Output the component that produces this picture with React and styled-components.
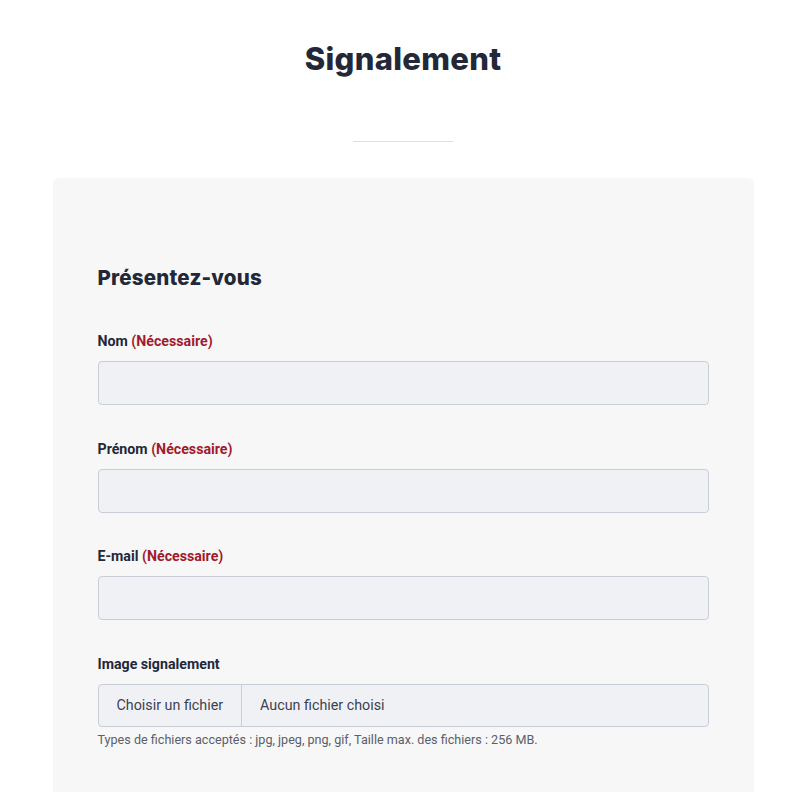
import React from "react";
import styled, { createGlobalStyle } from "styled-components";

const GlobalStyle = createGlobalStyle`
  html, body {
    margin: 0;
    padding: 0;
    background: #fff;
  }
  * {
    box-sizing: border-box;
  }
`;

const Page = styled.div`
  width: 100%;
  padding-top: 40px;
  font-family: "Roboto", "Liberation Sans", sans-serif;
  color: #222838;
`;

const Header = styled.header`
  display: flex;
  flex-direction: column;
  align-items: center;
`;

const Title = styled.h1`
  margin: 0;
  font-family: "Inter", "Liberation Sans", sans-serif;
  font-size: 31px;
  font-weight: 800;
  line-height: 38px;
  letter-spacing: 0.3px;
  color: #222838;
`;

const Rule = styled.hr`
  width: 100px;
  height: 1px;
  margin: 63px 0 0 0;
  border: 0;
  background: #dcdfe6;
`;

const Card = styled.section`
  width: 701px;
  margin: 36px auto 0 auto;
  padding: 85px 45px 60px 45px;
  min-height: 640px;
  background: #f7f7f7;
  border-radius: 6px;
`;

const SectionTitle = styled.h2`
  margin: 0 0 38px 0;
  font-family: "Inter", "Liberation Sans", sans-serif;
  font-size: 20.5px;
  font-weight: 800;
  line-height: 30px;
  letter-spacing: 0.2px;
  color: #222838;
`;

const Field = styled.div`
  display: flex;
  flex-direction: column;
  gap: 10px;
  margin-bottom: 33.5px;
`;

const Label = styled.label`
  font-size: 14.2px;
  font-weight: 700;
  line-height: 20px;
  color: #222838;
`;

const Required = styled.span`
  color: #a01a2c;
`;

const TextInput = styled.input`
  width: 100%;
  height: 44px;
  padding: 0 14px;
  background: #f0f1f5;
  border: 1px solid #c8cdd8;
  border-radius: 4px;
  font-family: inherit;
  font-size: 15px;
  outline: none;
`;

const FileBox = styled.div`
  display: flex;
  align-items: stretch;
  height: 43px;
  background: #f0f1f5;
  border: 1px solid #c8cdd8;
  border-radius: 4px;
  overflow: hidden;
`;

const FileButton = styled.div`
  display: flex;
  align-items: center;
  padding: 0 18px;
  border-right: 1px solid #c8cdd8;
  font-size: 14.3px;
  color: #3c4150;
`;

const FileName = styled.div`
  display: flex;
  align-items: center;
  padding: 0 18px;
  font-size: 14.3px;
  color: #3c4150;
`;

const Help = styled.p`
  margin: -5px 0 0 0;
  font-size: 12.6px;
  line-height: 16px;
  color: #5a5f6b;
`;

const fields = [
  { id: "nom", label: "Nom" },
  { id: "prenom", label: "Prénom" },
  { id: "email", label: "E-mail" },
];

export default function App() {
  return (
    <Page>
      <GlobalStyle />
      <Header>
        <Title>Signalement</Title>
        <Rule />
      </Header>
      <Card>
        <SectionTitle>Présentez-vous</SectionTitle>
        {fields.map((f) => (
          <Field key={f.id}>
            <Label htmlFor={f.id}>
              {f.label} <Required>(Nécessaire)</Required>
            </Label>
            <TextInput id={f.id} type="text" />
          </Field>
        ))}
        <Field>
          <Label>Image signalement</Label>
          <FileBox>
            <FileButton>Choisir un fichier</FileButton>
            <FileName>Aucun fichier choisi</FileName>
          </FileBox>
          <Help>
            Types de fichiers acceptés : jpg, jpeg, png, gif, Taille max. des
            fichiers : 256 MB.
          </Help>
        </Field>
      </Card>
    </Page>
  );
}
